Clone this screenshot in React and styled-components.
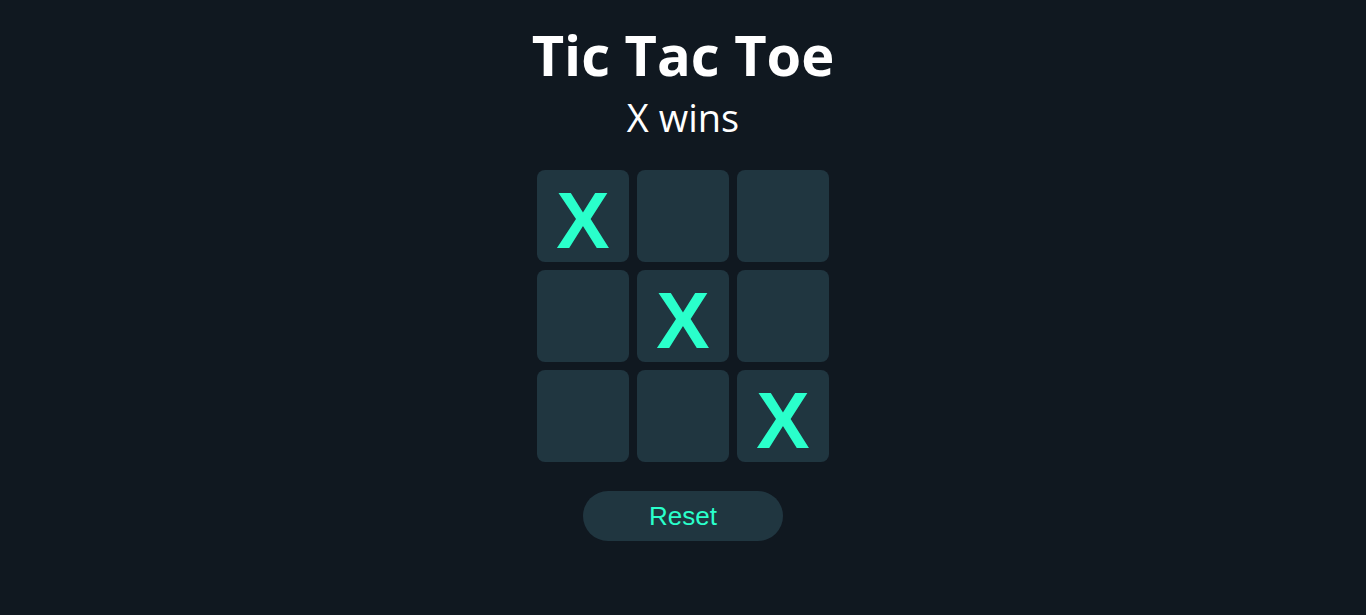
import styled, { createGlobalStyle } from "styled-components";

const GlobalStyle = createGlobalStyle`
    body{
        margin: 0;
        background-color: #101820;
        font-family: 'Open Sans', sans-serif;
    }
`;

const board = ["X", "", "", "", "X", "", "", "", "X"];

export default function App() {
    return (
        <Page>
            <GlobalStyle />
            <Title>Tic Tac Toe</Title>
            <Status>X wins</Status>
            <Board>
                {board.map((value, i) => (
                    <Cell key={i}>{value}</Cell>
                ))}
            </Board>
            <ResetButton>Reset</ResetButton>
        </Page>
    );
}

const Page = styled.div`
    display: flex;
    flex-direction: column;
    align-items: center;
    padding-top: 16px;
    color: #ffffff;
`;

const Title = styled.h1`
    margin: 0;
    font-size: 56px;
    font-weight: 700;
    line-height: 76px;
`;

const Status = styled.div`
    font-size: 38px;
    line-height: 52px;
    margin-top: -1px;
`;

const Board = styled.div`
    display: grid;
    grid-template-columns: repeat(3, 92px);
    grid-template-rows: repeat(3, 92px);
    gap: 8px;
    margin-top: 27px;
`;

const Cell = styled.div`
    background-color: #203640;
    border-radius: 8px;
    display: flex;
    align-items: center;
    justify-content: center;
    padding-top: 9px;
    box-sizing: border-box;
    font-family: 'Liberation Sans', Arial, sans-serif;
    font-weight: 700;
    font-size: 80px;
    color: #2affcb;
    cursor: pointer;
`;

const ResetButton = styled.button`
    margin-top: 29px;
    width: 200px;
    height: 50px;
    border: none;
    border-radius: 25px;
    background-color: #203640;
    color: #2affcb;
    font-family: 'Liberation Sans', Arial, sans-serif;
    font-size: 26px;
    cursor: pointer;
`;
